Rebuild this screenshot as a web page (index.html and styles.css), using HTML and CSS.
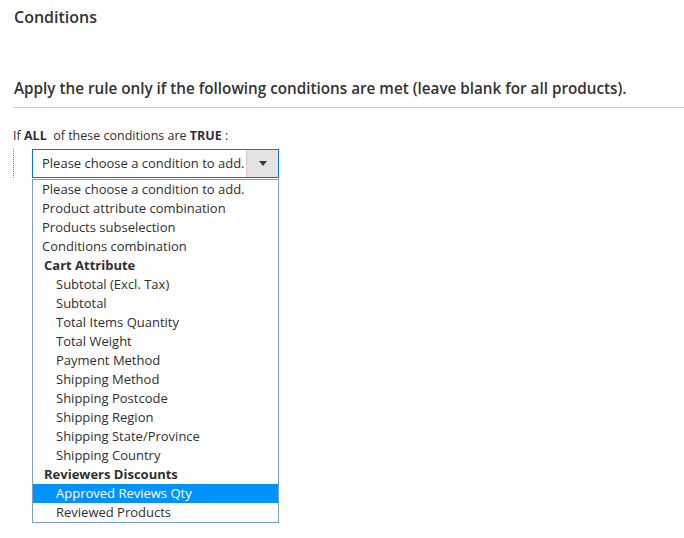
FILE: index.html
```html
<!DOCTYPE html>
<html>
<head>
<meta charset="utf-8">
<link rel="stylesheet" href="styles.css">
</head>
<body>
<div class="page">
  <h2 class="title">Conditions</h2>
  <h3 class="legend">Apply the rule only if the following conditions are met (leave blank for all products).</h3>
  <p class="rule">If <b>ALL</b>&nbsp; of these conditions are <b>TRUE</b> :</p>
  <div class="children">
    <div class="select">
      <span class="select-text">Please choose a condition to add.</span>
      <span class="select-arrow"><span class="tri"></span></span>
    </div>
  </div>
  <ul class="dropdown">
    <li class="opt">Please choose a condition to add.</li>
    <li class="opt">Product attribute combination</li>
    <li class="opt">Products subselection</li>
    <li class="opt">Conditions combination</li>
    <li class="group">Cart Attribute</li>
    <li class="opt sub">Subtotal (Excl. Tax)</li>
    <li class="opt sub">Subtotal</li>
    <li class="opt sub">Total Items Quantity</li>
    <li class="opt sub">Total Weight</li>
    <li class="opt sub">Payment Method</li>
    <li class="opt sub">Shipping Method</li>
    <li class="opt sub">Shipping Postcode</li>
    <li class="opt sub">Shipping Region</li>
    <li class="opt sub">Shipping State/Province</li>
    <li class="opt sub">Shipping Country</li>
    <li class="group">Reviewers Discounts</li>
    <li class="opt sub selected">Approved Reviews Qty</li>
    <li class="opt sub">Reviewed Products</li>
  </ul>
</div>
</body>
</html>
```

FILE: styles.css
```css
html, body {
  margin: 0;
  padding: 0;
  background: #fff;
}
body {
  font-family: "Open Sans", "Liberation Sans", sans-serif;
  color: #303030;
}
.page {
  padding: 7px 0 0 14px;
}
.title {
  margin: 0;
  font-size: 16px;
  font-weight: 600;
  line-height: 20px;
  color: #333;
}
.legend {
  margin: 50px 0 0 0;
  font-size: 15.25px;
  font-weight: 600;
  line-height: 22px;
  color: #333;
  padding-bottom: 8px;
  border-bottom: 1px solid #cdc7bd;
}
.rule {
  margin: 19px 0 0 -1px;
  font-size: 12.5px;
  line-height: 17px;
  color: #303030;
}
.rule b {
  font-weight: 700;
}
.children {
  margin: 5px 0 0 -1px;
  border-left: 1px dotted #888;
  padding-left: 18px;
}
.select {
  box-sizing: border-box;
  width: 247px;
  height: 29px;
  border: 1px solid #007bdb;
  display: flex;
  align-items: stretch;
  background: #fff;
}
.select-text {
  flex: 1;
  font-size: 13px;
  line-height: 27px;
  padding-left: 9px;
  color: #303030;
}
.select-arrow {
  width: 31px;
  background: #e3e3e3;
  border-left: 1px solid #cfcfcf;
  display: flex;
  align-items: center;
  justify-content: center;
}
.tri {
  width: 0;
  height: 0;
  border-left: 4px solid transparent;
  border-right: 4px solid transparent;
  border-top: 5px solid #41362f;
}
.dropdown {
  box-sizing: border-box;
  width: 247px;
  margin: 1px 0 0 18px;
  padding: 0;
  list-style: none;
  border: 1px solid #7aa0d6;
  background: #fff;
}
.dropdown li {
  height: 19px;
  line-height: 19px;
  font-size: 13px;
  white-space: nowrap;
}
.opt {
  padding-left: 9px;
  color: #303030;
}
.opt.sub {
  padding-left: 23px;
}
.group {
  padding-left: 11px;
  font-weight: 700;
  color: #303030;
  font-size: 13.5px;
}
.selected {
  background: #0092ff;
  color: #fff;
}
```
